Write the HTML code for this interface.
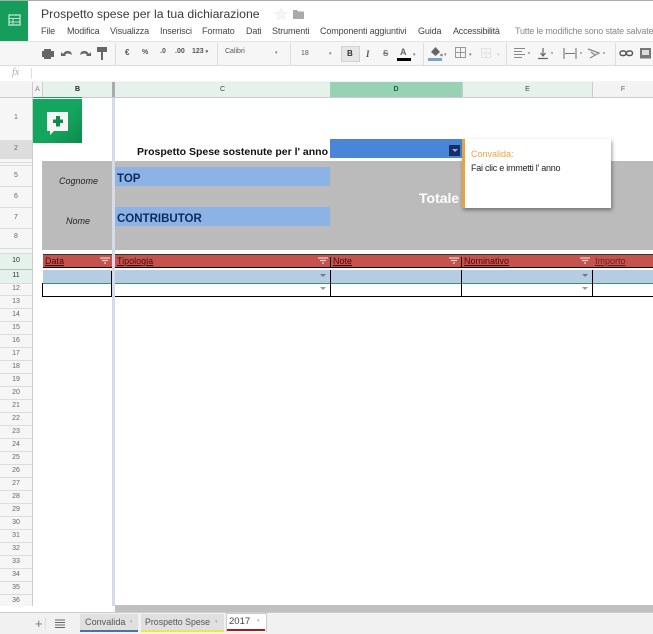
<!DOCTYPE html>
<html><head><meta charset="utf-8">
<style>
html,body{margin:0;padding:0;background:#fff}
#p{position:relative;width:653px;height:634px;overflow:hidden;background:#fff;font-family:"Liberation Sans",sans-serif;color:#333}
#p div{position:absolute;white-space:nowrap}
.m{top:25px;font-size:9px;line-height:12px;color:#444;letter-spacing:-.13px}
.t{font-size:7px;line-height:10px;color:#555;font-weight:bold}
.d{font-size:5px;line-height:10px;color:#777}
.rn{left:0;width:32px;text-align:center;font-size:7px;color:#666;line-height:12px}
.rl{left:0;width:32px;height:1px;background:#dcdcdc}
.ch{top:82px;height:15px;line-height:15px;text-align:center;font-size:7px;color:#444;background:#e5f2ec;box-sizing:border-box}
.bl{background:#000}
.hd{top:255px;height:12px;line-height:13px;font-size:9px;color:#4c0808;text-decoration:underline}
.ar{width:0;height:0;border-left:3px solid transparent;border-right:3px solid transparent;border-top:3px solid #777}
.sep{top:43px;height:22px;width:1px;background:#ddd}
.ta{font-size:5px;line-height:8px;color:#aaa}
</style></head><body><div id="p">
<!-- top -->
<div style="left:0;top:0;width:653px;height:1px;background:#aaa"></div>
<div style="left:0;top:1px;width:28px;height:40px;background:#169c5b"></div>
<svg style="position:absolute;left:8px;top:14px" width="14" height="13" viewBox="0 0 14 13"><rect x="1" y="1" width="11" height="10" fill="none" stroke="#bfe6d2" stroke-width="1.3"/><path d="M1 4.500H12M1 8H12M5 4.500V11" stroke="#bfe6d2" stroke-width="1" fill="none"/></svg>
<div style="left:41px;top:6px;font-size:12.25px;line-height:16px;color:#3a3a3a">Prospetto spese per la tua dichiarazione</div>
<svg style="position:absolute;left:274px;top:7px" width="14" height="14" viewBox="0 0 14 14"><path d="M7 1.500L8.600 5.400 12.800 5.700 9.600 8.400 10.600 12.500 7 10.300 3.400 12.500 4.400 8.400 1.200 5.700 5.400 5.400Z" fill="#f6f6f6" stroke="#efefef"/></svg>
<svg style="position:absolute;left:292px;top:8px" width="13" height="12" viewBox="0 0 13 12"><path d="M1 2H5L6.500 3.500H12V11H1Z" fill="#aaa"/></svg>
<div class="m" style="left:41px">File</div>
<div class="m" style="left:67px">Modifica</div>
<div class="m" style="left:110px">Visualizza</div>
<div class="m" style="left:160px">Inserisci</div>
<div class="m" style="left:202px">Formato</div>
<div class="m" style="left:246px">Dati</div>
<div class="m" style="left:272px">Strumenti</div>
<div class="m" style="left:320px">Componenti aggiuntivi</div>
<div class="m" style="left:418px">Guida</div>
<div class="m" style="left:453px;letter-spacing:-.22px">Accessibilità</div>
<div class="m" style="left:515px;color:#888;letter-spacing:-.2px">Tutte le modifiche sono state salvate</div>
<!-- toolbar -->
<div style="left:0;top:41px;width:653px;height:25px;background:#f6f6f6;border-top:1px solid #e3e3e3;border-bottom:1px solid #dcdcdc;box-sizing:border-box"></div>
<svg style="position:absolute;left:40px;top:44px" width="72" height="20" viewBox="0 0 72 20">
<path d="M4 5H11V7H14V13H11V15H4V13H2V7H4Z" fill="#666"/>
<path d="M23 10Q26 5 31 8L32 11 Q27 8 25 11L26 12H21V8Z" fill="#666"/>
<path d="M49 10Q46 5 41 8L40 11Q45 8 47 11L46 12H51V8Z" fill="#666"/>
<path d="M57 3H67V8H63V16H61V8H57Z" fill="#666"/>
</svg>
<div class="sep" style="left:115px"></div>
<div class="t" style="left:125px;top:48px;font-size:8px">€</div>
<div class="t" style="left:142px;top:48px">%</div>
<div class="t" style="left:160px;top:47px">.0</div>
<div class="t" style="left:175px;top:47px">.00</div>
<div class="t" style="left:192px;top:47px">123 <span style="font-size:5px">▾</span></div>
<div class="sep" style="left:217px"></div>
<div class="t" style="left:225px;top:47px;font-weight:normal">Calibri</div>
<div class="d" style="left:275px;top:48px">▾</div>
<div class="sep" style="left:290px"></div>
<div class="t" style="left:301px;top:49px;font-weight:normal">18</div>
<div class="d" style="left:329px;top:49px">▾</div>
<div style="left:341px;top:46px;width:19px;height:16px;background:#e6e6e6;border:1px solid #d2d2d2;box-sizing:border-box"></div>
<div class="t" style="left:347px;top:49px;color:#333;font-size:8px">B</div>
<div class="t" style="left:366px;top:49px;font-style:italic;font-family:'Liberation Serif',serif;font-size:9px">I</div>
<div class="t" style="left:383px;top:49px;text-decoration:line-through;font-size:8px;color:#777">S</div>
<div class="t" style="left:400px;top:47px;font-size:9px;color:#666">A</div>
<div style="left:397px;top:58px;width:14px;height:3px;background:#000"></div>
<div class="d" style="left:413px;top:50px">▾</div>
<div class="sep" style="left:423px"></div>
<svg style="position:absolute;left:428px;top:45px" width="16" height="13" viewBox="0 0 16 13"><path d="M3 7L7.500 2 12 7 7.500 11Z" fill="#666"/><circle cx="13.500" cy="10" r="1.300" fill="#888"/></svg>
<div style="left:428px;top:58px;width:14px;height:3px;background:#7aa3c7"></div>
<div class="d" style="left:444px;top:50px">▾</div>
<svg style="position:absolute;left:455px;top:47px" width="11" height="11" viewBox="0 0 11 11"><path d="M.5.5H10.500V10.500H.5ZM5.500.5V10.500M.5 5.500H10.500" fill="none" stroke="#999"/></svg>
<div class="d" style="left:469px;top:50px">▾</div>
<svg style="position:absolute;left:481px;top:48px" width="10" height="10" viewBox="0 0 10 10"><path d="M.5.5H9.500V9.500H.5ZM5 .5V9.500M.5 5H9.500" fill="none" stroke="#e2e2e2"/></svg>
<div class="d" style="left:497px;top:50px;color:#ccc">▾</div>
<div class="sep" style="left:506px"></div>
<svg style="position:absolute;left:514px;top:47px" width="100" height="13" viewBox="0 0 100 13">
<path d="M0 1.500H11M0 4.500H8M0 7.500H11M0 10.500H8" stroke="#888" stroke-width="1.100"/>
<path d="M29 1V8M26.500 6L29 9 31.500 6M24 11.500H34" stroke="#666" stroke-width="1.200" fill="none"/>
<path d="M50 1V12M62 1V12M51 6.500H61" stroke="#777" stroke-width="1.100" fill="none"/>
<path d="M74 2L85 6 76 11M77 5L81 8" stroke="#888" stroke-width="1.200" fill="none"/>
<path d="M14 6H16M37 6H39M66 6H68M89 6H91" stroke="#888" stroke-width="1.200"/>
</svg>
<div class="sep" style="left:615px"></div>
<svg style="position:absolute;left:619px;top:47px" width="34" height="13" viewBox="0 0 34 13">
<rect x="1" y="4" width="6" height="4.500" rx="2.200" fill="none" stroke="#555" stroke-width="1.400"/>
<rect x="7.500" y="4" width="6" height="4.500" rx="2.200" fill="none" stroke="#555" stroke-width="1.400"/>
<path d="M21 1H32V11.500H21Z" fill="#777"/><rect x="23" y="3" width="7" height="5" fill="#ddd"/>
</svg>
<!-- formula -->
<div style="left:0;top:66px;width:653px;height:15px;background:#fff;border-bottom:1px solid #ccc"></div>
<div style="left:12px;top:66px;font:italic 10px 'Liberation Serif',serif;color:#aaa;line-height:14px">fx</div>
<div style="left:31px;top:68px;width:1px;height:11px;background:#ddd"></div>
<!-- col headers -->
<div style="left:0;top:81px;width:653px;height:17px;background:#f3f3f3;border-bottom:1px solid #ccc;box-sizing:border-box"></div>
<div style="left:32px;top:82px;width:11px;height:15px;line-height:15px;text-align:center;font-size:7px;color:#888;border-left:1px solid #ccc;border-right:1px solid #ccc;box-sizing:border-box">A</div>
<div class="ch" style="left:43px;width:69px;color:#222;font-weight:bold">B</div>
<div class="ch" style="left:115px;width:215px">C</div>
<div class="ch" style="left:330px;width:132px;background:#97d2b4;color:#0f6a3a;font-weight:bold">D</div>
<div class="ch" style="left:462px;width:130px;border-left:1px solid #ccc">E</div>
<div style="left:592px;top:82px;width:61px;height:15px;line-height:15px;text-align:center;font-size:7px;color:#666;border-left:1px solid #ccc;box-sizing:border-box">F</div>
<div style="left:112px;top:82px;width:3px;height:15px;background:#aaa"></div>
<div style="left:33px;top:97px;width:49px;height:1px;background:#1a9c5a"></div>
<!-- row header column -->
<div style="left:0;top:98px;width:32px;height:508px;background:#f6f6f6;border-right:1px solid #ccc"></div>
<div style="left:0;top:140px;width:32px;height:18px;background:#ddd"></div>
<div style="left:0;top:254px;width:32px;height:15px;background:#e5f2ec"></div>
<div style="left:0;top:269px;width:32px;height:14px;background:#e5f2ec"></div>
<div class="rl" style="top:140px"></div><div class="rl" style="top:158px"></div><div class="rl" style="top:162px"></div><div class="rl" style="top:165px"></div><div class="rl" style="top:186px"></div><div class="rl" style="top:207px"></div><div class="rl" style="top:228px"></div><div class="rl" style="top:248px"></div><div class="rl" style="top:253px"></div><div class="rl" style="top:269px;background:#bbb"></div><div class="rl" style="top:283px"></div><div class="rl" style="top:295px"></div>
<div class="rn" style="top:112px">1</div><div class="rn" style="top:143px">2</div><div class="rn" style="top:170px">5</div><div class="rn" style="top:191px">6</div><div class="rn" style="top:212px">7</div><div class="rn" style="top:231px">8</div><div class="rn" style="top:255px;color:#333">10</div><div class="rn" style="top:270px;color:#333">11</div><div class="rn" style="top:283px">12</div>
<div class="rn" style="top:296px">13</div><div class="rl" style="top:308px"></div><div class="rn" style="top:309px">14</div><div class="rl" style="top:321px"></div><div class="rn" style="top:322px">15</div><div class="rl" style="top:334px"></div><div class="rn" style="top:335px">16</div><div class="rl" style="top:347px"></div><div class="rn" style="top:348px">17</div><div class="rl" style="top:360px"></div><div class="rn" style="top:361px">18</div><div class="rl" style="top:373px"></div><div class="rn" style="top:374px">19</div><div class="rl" style="top:386px"></div><div class="rn" style="top:387px">20</div><div class="rl" style="top:399px"></div><div class="rn" style="top:400px">21</div><div class="rl" style="top:412px"></div><div class="rn" style="top:413px">22</div><div class="rl" style="top:425px"></div><div class="rn" style="top:426px">23</div><div class="rl" style="top:438px"></div><div class="rn" style="top:439px">24</div><div class="rl" style="top:451px"></div><div class="rn" style="top:452px">25</div><div class="rl" style="top:464px"></div><div class="rn" style="top:465px">26</div><div class="rl" style="top:477px"></div><div class="rn" style="top:478px">27</div><div class="rl" style="top:490px"></div><div class="rn" style="top:491px">28</div><div class="rl" style="top:503px"></div><div class="rn" style="top:504px">29</div><div class="rl" style="top:516px"></div><div class="rn" style="top:517px">30</div><div class="rl" style="top:529px"></div><div class="rn" style="top:530px">31</div><div class="rl" style="top:542px"></div><div class="rn" style="top:543px">32</div><div class="rl" style="top:555px"></div><div class="rn" style="top:556px">33</div><div class="rl" style="top:568px"></div><div class="rn" style="top:569px">34</div><div class="rl" style="top:581px"></div><div class="rn" style="top:582px">35</div><div class="rl" style="top:594px"></div><div class="rn" style="top:595px">36</div>
<!-- logo -->
<div style="left:33px;top:99px;width:49px;height:44px;background:linear-gradient(135deg,#14a55e 55%,#0f8a4c)"></div>
<svg style="position:absolute;left:47px;top:112px" width="21" height="23" viewBox="0 0 21 23"><path d="M0 0H21V19H7L3 23V19H0Z" fill="#f5f5f5"/><path d="M9 4H13V7.500H16V11H13V14.500H9V11H6V7.500H9Z" fill="#0f8a4c"/></svg>
<!-- gray block -->
<div style="left:42px;top:161px;width:611px;height:89px;background:#bbb"></div>
<div style="right:325px;top:145px;font:bold 10.5px/14px 'Liberation Sans',sans-serif;color:#111">Prospetto Spese sostenute per l' anno</div>
<div style="left:330px;top:139px;width:132px;height:19px;background:#4a86d8"></div>
<div style="left:449px;top:145px;width:11px;height:11px;background:#12306a"></div>
<div class="ar" style="left:452px;top:149px;border-top-color:#aac"></div>
<div style="left:59px;top:175px;font:italic 9px/12px 'Liberation Sans',sans-serif;color:#222">Cognome</div>
<div style="left:66px;top:215px;font:italic 9px/12px 'Liberation Sans',sans-serif;color:#222">Nome</div>
<div style="left:115px;top:167px;width:215px;height:19px;background:#8cb3e6"></div>
<div style="left:115px;top:207px;width:215px;height:19px;background:#8cb3e6"></div>
<div style="left:117px;top:172px;font:bold 11.5px/15px 'Liberation Sans',sans-serif;color:#0e2a5a">TOP</div>
<div style="left:117px;top:212px;font:bold 11.500px/15px 'Liberation Sans',sans-serif;color:#0e2a5a">CONTRIBUTOR</div>
<div style="left:419px;top:190px;font:bold 14px/17px 'Liberation Sans',sans-serif;color:#fff">Totale</div>
<!-- table -->
<div style="left:43px;top:254px;width:610px;height:14px;background:#c6524e"></div>
<div style="left:43px;top:270px;width:610px;height:13px;background:#b5cde3"></div>
<div style="left:43px;top:254px;width:610px;height:1px;background:#2a3a2a"></div>
<div class="bl" style="left:43px;top:267px;width:610px;height:1px"></div>
<div style="left:43px;top:283px;width:610px;height:1px;background:#3f8f78"></div>
<div class="bl" style="left:42px;top:296px;width:611px;height:1px"></div>
<div class="bl" style="left:42px;top:283px;width:1px;height:14px"></div>
<div class="bl" style="left:111px;top:271px;width:1px;height:26px"></div>
<div class="bl" style="left:114px;top:271px;width:1px;height:26px"></div>
<div class="bl" style="left:330px;top:257px;width:1px;height:10px"></div>
<div class="bl" style="left:330px;top:270px;width:1px;height:27px"></div>
<div class="bl" style="left:461px;top:257px;width:1px;height:10px"></div>
<div class="bl" style="left:461px;top:270px;width:1px;height:27px"></div>
<div class="bl" style="left:592px;top:270px;width:1px;height:27px"></div>
<div class="hd" style="left:45px">Data</div>
<div class="hd" style="left:117px">Tipologia</div>
<div class="hd" style="left:333px">Note</div>
<div class="hd" style="left:464px">Nominativo</div>
<div class="hd" style="left:595px;color:#6c2020">Importo</div>
<svg style="position:absolute;left:100px;top:257px" width="11" height="7" viewBox="0 0 11 7"><path d="M0 1H10M2 3.500H8M4 6H6" stroke="#f4d0cc" stroke-width="1.300"/></svg>
<svg style="position:absolute;left:318px;top:257px" width="11" height="7" viewBox="0 0 11 7"><path d="M0 1H10M2 3.500H8M4 6H6" stroke="#f4d0cc" stroke-width="1.300"/></svg>
<svg style="position:absolute;left:449px;top:257px" width="11" height="7" viewBox="0 0 11 7"><path d="M0 1H10M2 3.500H8M4 6H6" stroke="#f4d0cc" stroke-width="1.300"/></svg>
<svg style="position:absolute;left:580px;top:257px" width="11" height="7" viewBox="0 0 11 7"><path d="M0 1H10M2 3.500H8M4 6H6" stroke="#f4d0cc" stroke-width="1.300"/></svg>
<div class="ar" style="left:320px;top:274px"></div><div class="ar" style="left:320px;top:287px;border-top-color:#999"></div>
<div class="ar" style="left:582px;top:274px"></div><div class="ar" style="left:582px;top:287px;border-top-color:#999"></div>
<!-- note -->
<div style="left:462px;top:139px;width:149px;height:69px;background:#fff;border-left:3px solid #e8a33a;box-sizing:border-box;box-shadow:1px 2px 4px rgba(0,0,0,.4)"></div>
<div style="left:471px;top:148px;font-size:9px;line-height:12px;color:#e8a63c">Convalida:</div>
<div style="left:471px;top:162px;font-size:9px;line-height:12px;color:#222;letter-spacing:-.25px">Fai clic e immetti l' anno</div>
<!-- freeze -->
<div style="left:112px;top:98px;width:3px;height:508px;background:#d5dbe8"></div>
<!-- scrollbar + tabs -->
<div style="left:115px;top:605px;width:538px;height:7px;background:#c0c0c0"></div>
<div style="left:0;top:606px;width:115px;height:6px;background:#fff"></div>
<div style="left:0;top:612px;width:653px;height:22px;background:#f1f1f1;border-top:1px solid #ccc;box-sizing:border-box"></div>
<div style="left:35px;top:616px;font-size:13px;line-height:15px;color:#777">+</div>
<div style="left:45px;top:618px;width:1px;height:11px;background:#ddd"></div>
<svg style="position:absolute;left:55px;top:619px" width="10" height="9" viewBox="0 0 10 9"><path d="M0 1H10M0 3.500H10M0 6H10M0 8.500H10" stroke="#666"/></svg>
<div style="left:80px;top:614px;width:58px;height:18px;background:#e0e0e0;font-size:9.100px;line-height:17px;color:#555;text-indent:5px">Convalida</div>
<div class="ta" style="left:130px;top:618px">▾</div>
<div style="left:80px;top:630px;width:58px;height:2px;background:#4a72a8"></div>
<div style="left:141px;top:614px;width:83px;height:18px;background:#e0e0e0;font-size:8.800px;line-height:17px;color:#555;text-indent:4px">Prospetto Spese</div>
<div class="ta" style="left:215px;top:618px">▾</div>
<div style="left:141px;top:630px;width:83px;height:2px;background:#efe83a"></div>
<div style="left:226px;top:613px;width:41px;height:19px;background:#fff;border:1px solid #ccc;border-bottom:0;box-sizing:border-box;font-size:9.500px;line-height:15px;color:#444;text-indent:2px">2017</div>
<div class="ta" style="left:257px;top:617px">▾</div>
<div style="left:227px;top:629px;width:38px;height:2px;background:#a31c1c"></div>
</div></body></html>
